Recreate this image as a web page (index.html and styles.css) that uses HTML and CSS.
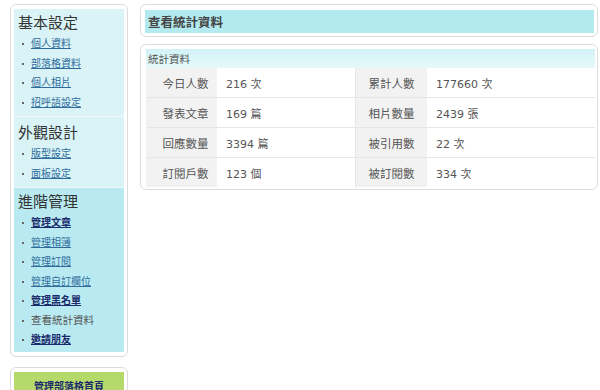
FILE: index.html
```html
<!DOCTYPE html>
<html lang="zh-Hant">
<head>
  <meta charset="UTF-8" />
  <title>查看統計資料</title>
  <link rel="stylesheet" href="styles.css">
</head>
<body>
  <div id="page">
    <div id="sidebar">
      <div class="box menuBox">
        <div class="menuGroup">
          <div class="menuTitle">基本設定</div>
          <ul class="menuList">
            <li><a href="#">個人資料</a></li>
            <li><a href="#">部落格資料</a></li>
            <li><a href="#">個人相片</a></li>
            <li><a href="#">招呼語設定</a></li>
          </ul>
        </div>
        <div class="menuGroup">
          <div class="menuTitle">外觀設計</div>
          <ul class="menuList">
            <li><a href="#">版型設定</a></li>
            <li><a href="#">面板設定</a></li>
          </ul>
        </div>
        <div class="menuGroup active">
          <div class="menuTitle">進階管理</div>
          <ul class="menuList">
            <li><a href="#" class="strong">管理文章</a></li>
            <li><a href="#">管理相簿</a></li>
            <li><a href="#">管理訂閱</a></li>
            <li><a href="#">管理自訂欄位</a></li>
            <li><a href="#" class="strong">管理黑名單</a></li>
            <li><span class="current">查看統計資料</span></li>
            <li><a href="#" class="strong">邀請朋友</a></li>
          </ul>
        </div>
      </div>

      <div class="box homeBox">
        <div class="homeInner">
          <a href="#">管理部落格首頁</a>
        </div>
      </div>
    </div>

    <div id="main">
      <div class="box">
        <div class="pageTitle">查看統計資料</div>
      </div>

      <div class="box statsBox">
        <div class="statsHead">統計資料</div>
        <table class="statsTable">
          <tr>
            <th>今日人數</th><td>216 次</td>
            <th>累計人數</th><td>177660 次</td>
          </tr>
          <tr>
            <th>發表文章</th><td>169 篇</td>
            <th>相片數量</th><td>2439 張</td>
          </tr>
          <tr>
            <th>回應數量</th><td>3394 篇</td>
            <th>被引用數</th><td>22 次</td>
          </tr>
          <tr>
            <th>訂閱戶數</th><td>123 個</td>
            <th>被訂閱數</th><td>334 次</td>
          </tr>
        </table>
      </div>
    </div>
  </div>
</body>
</html>
```

FILE: styles.css
```css
html, body {
  margin: 0;
  padding: 0;
  background: #fff;
  font-family: "DejaVu Sans", "Noto Sans CJK TC", sans-serif;
  color: #555;
}

#page {
  display: flex;
  align-items: flex-start;
  gap: 12px;
  padding: 4px 2px 0 10px;
}

.box {
  background: #fff;
  border: 1px solid #dcdcdc;
  border-radius: 6px;
  padding: 5px 3px 3px 4px;
  margin-bottom: 7px;
}

#sidebar {
  width: 118px;
  flex: none;
}

#main {
  flex: 1;
}

/* left menu */

.menuBox {
  padding: 4px 3px 4px 3px;
  margin-bottom: 10px;
}

.menuGroup {
  background: #d9f3f7;
  padding: 2px 0 5px 0;
  border-bottom: 1px solid #eef9fb;
}

.menuGroup + .menuGroup {
  padding-top: 4px;
}

.menuGroup.active {
  background: #b9eaf1;
  padding-top: 2px;
  padding-bottom: 3px;
  border-bottom: none;
}

.menuTitle {
  font-family: "Noto Sans CJK TC", sans-serif;
  font-size: 15px;
  line-height: 22px;
  color: #333;
  padding-left: 4px;
}

.menuList {
  list-style: none;
  margin: 0;
  padding: 0 0 0 8px;
}

.menuList li {
  font-family: "Noto Sans CJK TC", sans-serif;
  font-size: 10px;
  line-height: 19.5px;
}

.menuList li::before {
  content: "";
  display: inline-block;
  width: 2px;
  height: 2px;
  background: #666;
  vertical-align: middle;
  margin-right: 7px;
}

.menuList a {
  color: #2f6c9c;
}

.menuList a.strong {
  color: #1a2a6c;
  font-weight: bold;
}

.menuList .current {
  color: #555;
  font-size: 10.5px;
}

.homeBox {
  padding: 4px 3px;
}

.homeInner {
  background: #b6d96c;
  text-align: center;
  padding: 3px 0 30px 0;
}

.homeInner a {
  font-family: "Noto Sans CJK TC", sans-serif;
  font-size: 10px;
  font-weight: bold;
  color: #1a2a6c;
}

/* main */

.pageTitle {
  background: #b3eaf0;
  height: 23px;
  line-height: 23px;
  padding-left: 3px;
  font-family: "Noto Sans CJK TC", sans-serif;
  font-size: 12.5px;
  font-weight: bold;
  color: #444;
}

.statsBox {
  padding: 4px 2px 2px 5px;
}

.statsHead {
  background: linear-gradient(#d2f3f7, #e6f8fa);
  height: 19px;
  line-height: 19px;
  padding-left: 2px;
  font-family: "Noto Sans CJK TC", sans-serif;
  font-size: 10.5px;
  color: #555;
}

.statsTable {
  width: 100%;
  border-collapse: collapse;
  font-size: 11px;
}

.statsTable th,
.statsTable td {
  height: 29px;
  border-bottom: 1px solid #e6e6e6;
  padding: 0;
}

.statsTable tr:last-child th,
.statsTable tr:last-child td {
  border-bottom: none;
}

.statsTable th {
  width: 71px;
  background: #f2f2f2;
  font-weight: normal;
  font-family: "Noto Sans CJK TC", sans-serif;
  font-size: 11.5px;
  color: #555;
  text-align: center;
}

.statsTable th:first-child {
  padding-left: 8px;
  width: 63px;
}

.statsTable td {
  padding-left: 9px;
  color: #555;
}

.statsTable td:nth-child(2) {
  width: 129px;
  border-right: 1px solid #e6e6e6;
}
```
